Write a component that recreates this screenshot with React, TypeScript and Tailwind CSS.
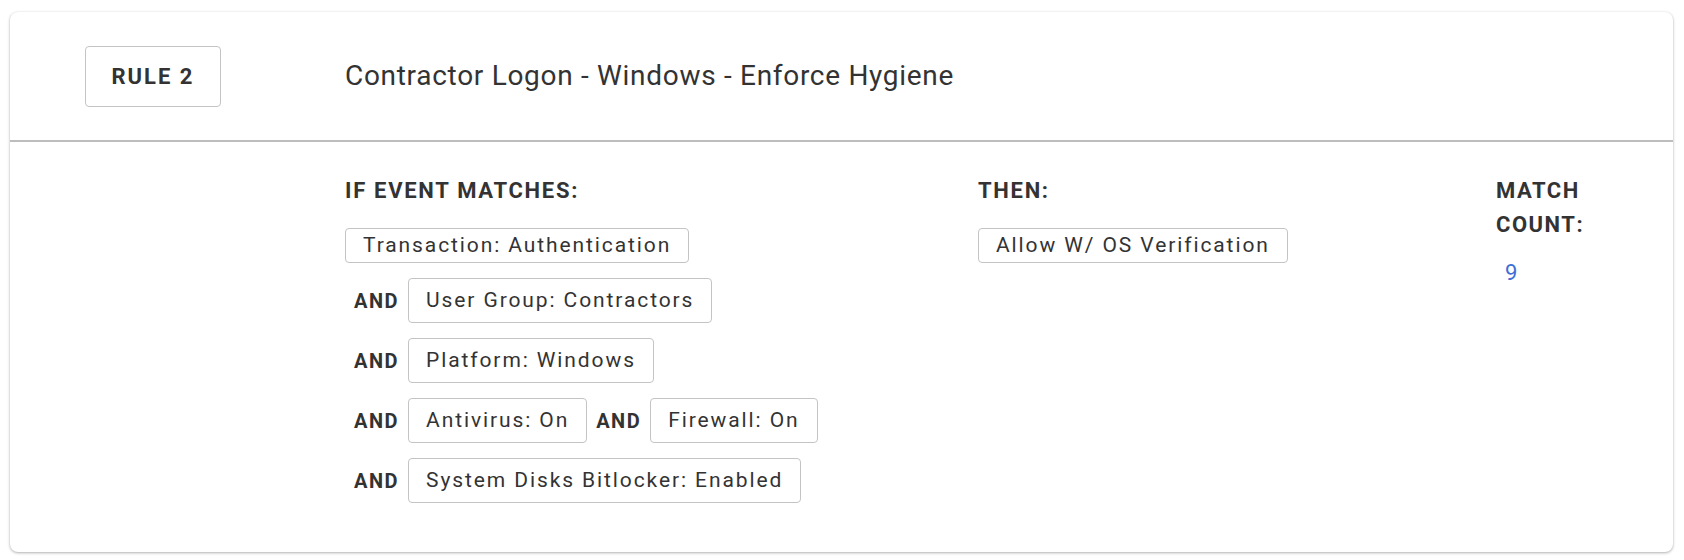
import React from "react";

const font = { fontFamily: "Roboto, 'Noto Sans', sans-serif" };

function Chip({ children, tall }: { children: React.ReactNode; tall?: boolean }) {
  return (
    <span
      className={`inline-flex items-center whitespace-nowrap rounded-[4px] border border-[#c4c4c4] bg-white px-[17px] text-[21px] tracking-[1.9px] text-[#333] ${
        tall ? "h-[45px]" : "h-[35px]"
      }`}
    >
      {children}
    </span>
  );
}

function And() {
  return (
    <span className="px-[9px] text-[20px] font-bold tracking-[1.5px] text-[#333]">AND</span>
  );
}

export default function App() {
  return (
    <div className="min-h-[560px] bg-white pt-[12px] pl-[10px] pr-[11px]" style={font}>
      <div className="rounded-[8px] bg-white shadow-[0_1px_3px_rgba(0,0,0,0.3),0_0_2px_rgba(0,0,0,0.06)]">
        <div className="flex h-[130px] items-center border-b-2 border-[#bdbdbd] pl-[75px]">
          <div className="flex h-[61px] w-[136px] items-center justify-center rounded-[4px] border border-[#c4c4c4] text-[22px] font-bold tracking-[2px] text-[#333]">
            RULE 2
          </div>
          <div className="ml-[124px] text-[28px] tracking-[0.7px] text-[#333]">
            Contractor Logon - Windows - Enforce Hygiene
          </div>
        </div>
        <div className="flex pt-[32px] pb-[49px] pl-[335px]">
          <div className="w-[633px]">
            <div className="text-[22px] font-bold leading-[34px] tracking-[1.7px] text-[#333]">
              IF EVENT MATCHES:
            </div>
            <div className="mt-[20px] flex flex-col gap-[15px]">
              <div>
                <Chip>Transaction: Authentication</Chip>
              </div>
              <div className="flex items-center">
                <And />
                <Chip tall>User Group: Contractors</Chip>
              </div>
              <div className="flex items-center">
                <And />
                <Chip tall>Platform: Windows</Chip>
              </div>
              <div className="flex items-center">
                <And />
                <Chip tall>Antivirus: On</Chip>
                <And />
                <Chip tall>Firewall: On</Chip>
              </div>
              <div className="flex items-center">
                <And />
                <Chip tall>System Disks Bitlocker: Enabled</Chip>
              </div>
            </div>
          </div>
          <div className="w-[518px]">
            <div className="text-[22px] font-bold leading-[34px] tracking-[1.7px] text-[#333]">THEN:</div>
            <div className="mt-[20px]">
              <Chip>Allow W/ OS Verification</Chip>
            </div>
          </div>
          <div className="w-[110px]">
            <div className="text-[22px] font-bold leading-[34px] tracking-[1.5px] text-[#333]">
              MATCH COUNT:
            </div>
            <div className="mt-[17px] pl-[9px] text-[22px] leading-[28px] text-[#3d6fd6]">9</div>
          </div>
        </div>
      </div>
    </div>
  );
}
